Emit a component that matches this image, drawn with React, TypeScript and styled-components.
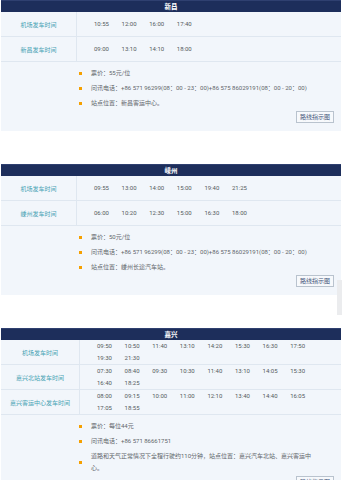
import React from "react";
import styled, { createGlobalStyle } from "styled-components";

const Global = createGlobalStyle`
  html, body { margin: 0; padding: 0; background: #ffffff; }
  body { font-family: "Roboto", "Noto Sans CJK SC", sans-serif; }
  * { box-sizing: border-box; }
`;

const Page = styled.div`
  position: relative;
  padding: 0 1px;
  display: flex;
  flex-direction: column;
  gap: 33px;
`;

const Section = styled.section`
  background: #f2f6fb;
  display: flex;
  flex-direction: column;
`;

const Header = styled.div`
  background: #1d2e5b;
  color: #ffffff;
  font-size: 6.5px;
  font-weight: 700;
  height: 12px;
  line-height: 12px;
  text-align: center;
  border-top: 1px solid #2f4070;
`;

const Row = styled.div`
  display: flex;
  min-height: 25px;
  border-bottom: 1px solid #dfe7f0;
`;

const Label = styled.div<{ $w: number }>`
  width: ${(p) => p.$w}px;
  flex: none;
  display: flex;
  align-items: center;
  justify-content: center;
  color: #48a3b4;
  font-size: 6px;
  border-right: 1px solid #dfe7f0;
`;

const Times = styled.div`
  flex: 1;
  display: flex;
  flex-wrap: wrap;
  align-content: center;
  padding: 0 10px 0 17px;
`;

const Time = styled.span`
  width: 27.6px;
  line-height: 12px;
  font-size: 6px;
  color: #555a60;
`;

const Info = styled.div`
  display: flex;
  flex-direction: column;
  padding: 5px 7px 8px 78px;
`;

const List = styled.ul`
  list-style: none;
  margin: 0;
  padding: 0 13px 0 0;
  display: flex;
  flex-direction: column;
  gap: 3px;
`;

const Item = styled.li`
  display: flex;
  align-items: center;
  gap: 9px;
  font-size: 6px;
  line-height: 12px;
  color: #62666b;
`;

const Dot = styled.span`
  flex: none;
  width: 3px;
  height: 3px;
  background: #f5a000;
`;

const MapButton = styled.button`
  align-self: flex-end;
  margin-top: 2px;
  height: 12px;
  padding: 0 3px;
  font-family: inherit;
  font-size: 6px;
  line-height: 10px;
  color: #44557a;
  background: #f7f9fc;
  border: 1px solid #b9c3ce;
  border-radius: 0;
`;

const SideTab = styled.div`
  position: absolute;
  right: 0;
  top: 280px;
  width: 5px;
  height: 35px;
  background: #ebecee;
`;

type RowData = { label: string; times: string[] };
type SectionData = { name: string; labelWidth: number; rows: RowData[]; info: string[] };

const phone = "问讯电话：+86 571 96299(08：00 - 23：00)+86 575 86029191(08：00 - 20：00)";

const data: SectionData[] = [
  {
    name: "新昌",
    labelWidth: 76,
    rows: [
      { label: "机场发车时间", times: ["10:55", "12:00", "16:00", "17:40"] },
      { label: "新昌发车时间", times: ["09:00", "13:10", "14:10", "18:00"] },
    ],
    info: ["票价：55元/位", phone, "站点位置：新昌客运中心。"],
  },
  {
    name: "嵊州",
    labelWidth: 76,
    rows: [
      { label: "机场发车时间", times: ["09:55", "13:00", "14:00", "15:00", "19:40", "21:25"] },
      { label: "嵊州发车时间", times: ["06:00", "10:20", "12:30", "15:00", "16:30", "18:00"] },
    ],
    info: ["票价：50元/位", phone, "站点位置：嵊州长途汽车站。"],
  },
  {
    name: "嘉兴",
    labelWidth: 79,
    rows: [
      {
        label: "机场发车时间",
        times: ["09:50", "10:50", "11:40", "13:10", "14:20", "15:30", "16:30", "17:50", "19:30", "21:30"],
      },
      {
        label: "嘉兴北站发车时间",
        times: ["07:30", "08:40", "09:30", "10:30", "11:40", "13:10", "14:05", "15:30", "16:40", "18:25"],
      },
      {
        label: "嘉兴客运中心发车时间",
        times: ["08:00", "09:15", "10:00", "11:00", "12:10", "13:40", "14:40", "16:05", "17:05", "18:55"],
      },
    ],
    info: [
      "票价：每位44元",
      "问讯电话：+86 571 86661751",
      "道路和天气正常情况下全程行驶约110分钟，站点位置：嘉兴汽车北站、嘉兴客运中心。",
    ],
  },
];

export default function App() {
  return (
    <>
      <Global />
      <Page>
        {data.map((s) => (
          <Section key={s.name}>
            <Header>{s.name}</Header>
            {s.rows.map((r) => (
              <Row key={r.label}>
                <Label $w={s.labelWidth}>{r.label}</Label>
                <Times>
                  {r.times.map((t, i) => (
                    <Time key={i}>{t}</Time>
                  ))}
                </Times>
              </Row>
            ))}
            <Info>
              <List>
                {s.info.map((t) => (
                  <Item key={t}>
                    <Dot />
                    <span>{t}</span>
                  </Item>
                ))}
              </List>
              <MapButton>路线指示图</MapButton>
            </Info>
          </Section>
        ))}
        <SideTab />
      </Page>
    </>
  );
}
